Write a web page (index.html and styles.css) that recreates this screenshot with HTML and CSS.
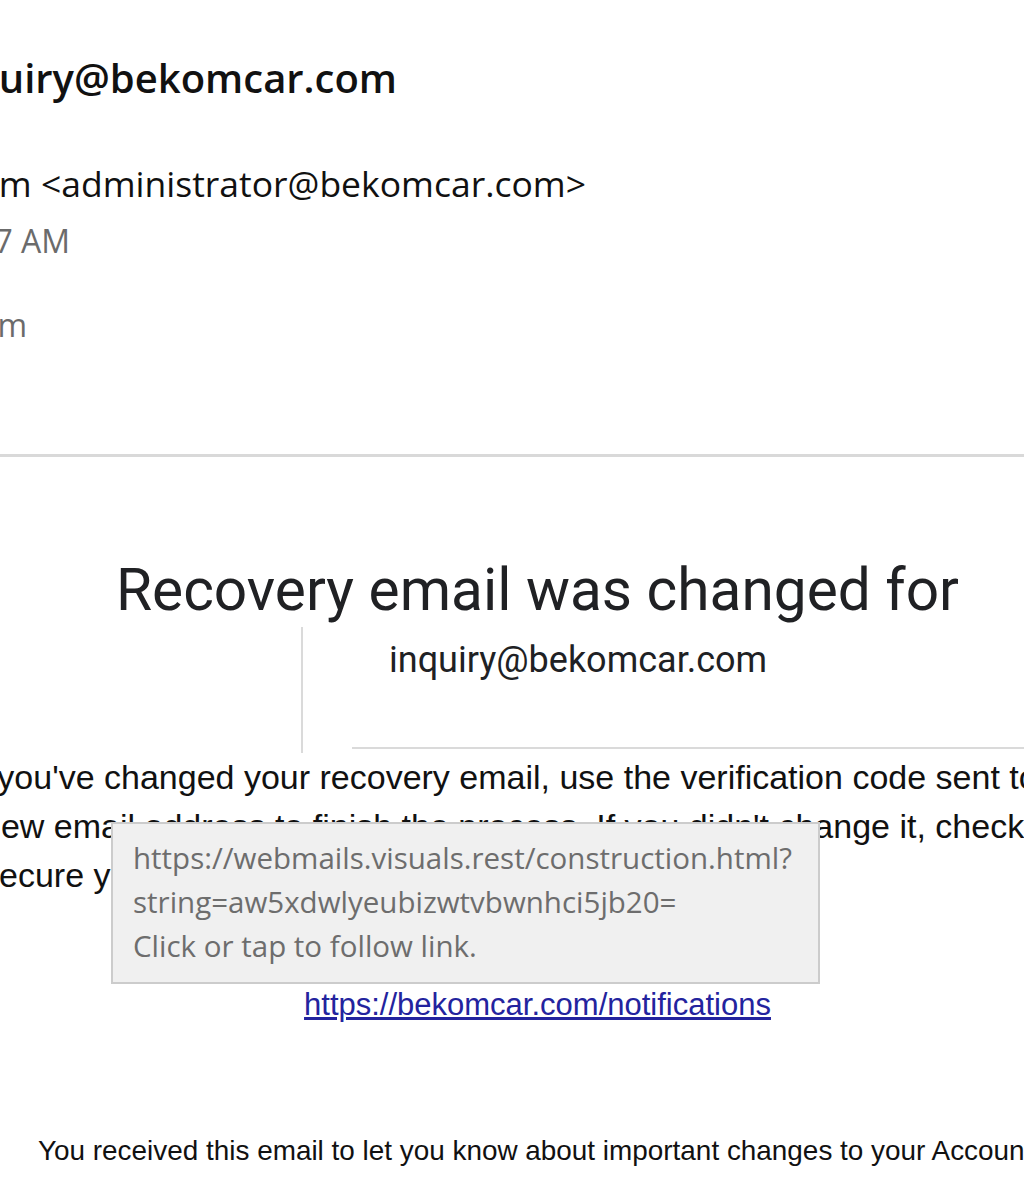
FILE: index.html
```html
<!DOCTYPE html>
<html>

<head lang="en">
    <meta charset="UTF-8">
    <title>Recovery email was changed</title>
    <link rel="stylesheet" href="styles.css">
</head>

<body>
    <div class="page">
        <header class="mail-head">
            <div class="head-line subject-line"><h1 class="subject">inquiry@bekomcar.com</h1></div>
            <div class="head-line sender-line"><span class="sender">bekomcar.com &lt;administrator@bekomcar.com&gt;</span></div>
            <div class="head-line date-line"><span class="meta">Thu 9/16/2021 9:37 AM</span></div>
            <div class="head-line to-line"><span class="meta">To: inquiry@bekomcar.com</span></div>
        </header>

        <hr class="divider">

        <div class="mail-body">
            <h2 class="title">Recovery email was changed for</h2>
            <div class="account">
                <div class="account-rule"></div>
                <div class="account-main">
                    <p class="account-email">inquiry@bekomcar.com</p>
                </div>
            </div>

            <div class="message-wrap">
                <p class="message">If you've changed your recovery email, use the verification code sent to the<br>
                    new email address to finish the process. If you didn't change it, check and<br>
                    secure your account.</p>

                <div class="link-tip">
                    <p>https://webmails.visuals.rest/construction.html?</p>
                    <p>string=aw5xdwlyeubizwtvbwnhci5jb20=</p>
                    <p>Click or tap to follow link.</p>
                </div>
            </div>

            <p class="notify"><a href="#">https://bekomcar.com/notifications</a></p>

            <p class="footer-note">You received this email to let you know about important changes to your Account and services.</p>
        </div>
    </div>
</body>

</html>
```

FILE: styles.css
```css
html,
body {
    margin: 0;
    background-color: #ffffff;
    overflow: hidden;
}

.page {
    width: 1024px;
    height: 1200px;
}

/* header of the message, cut off on the left */

.mail-head {
    padding-top: 52px;
    height: 398px;
    box-sizing: border-box;
}

.head-line {
    display: flex;
    justify-content: flex-end;
    white-space: nowrap;
}

.subject-line {
    width: 397px;
    height: 52px;
}

.subject {
    margin: 0;
    font-family: "Open Sans", "Noto Sans", sans-serif;
    font-size: 40px;
    font-weight: 600;
    line-height: 52px;
    color: #111111;
}

.sender-line {
    width: 586px;
    margin-top: 57px;
}

.sender {
    font-family: "Open Sans", "Noto Sans", sans-serif;
    font-size: 35.5px;
    line-height: 44px;
    color: #111111;
}

.date-line {
    width: 70px;
    margin-top: 14px;
}

.to-line {
    width: 27px;
    margin-top: 40px;
}

.meta {
    font-family: "Open Sans", "Noto Sans", sans-serif;
    font-size: 32px;
    line-height: 44px;
    color: #6b6b6b;
}

.divider {
    margin: 56px 0 0 0;
    height: 3px;
    border: none;
    background-color: #d9d9d9;
}

/* body of the message */

.mail-body {
    width: 1115px;
    margin-left: -20px;
}

.title {
    margin: 96px 0 0 0;
    font-family: Roboto, "Liberation Sans", sans-serif;
    font-size: 58.6px;
    font-weight: 400;
    line-height: 74px;
    text-align: center;
    color: #202124;
}

.account {
    display: flex;
    height: 126px;
}

.account-rule {
    width: 2px;
    margin-left: 321px;
    background-color: #dadada;
}

.account-main {
    flex: 1;
    margin-left: 49px;
    border-bottom: 2px solid #dadada;
    margin-bottom: 4px;
}

.account-email {
    margin: 11px 0 0 0;
    padding-left: 37px;
    font-family: Roboto, "Liberation Sans", sans-serif;
    font-size: 36px;
    line-height: 44px;
    color: #202124;
}

.message-wrap {
    position: relative;
}

.message {
    margin: 0 0 0 2px;
    text-indent: -13px;
    font-family: "Liberation Sans", Arial, sans-serif;
    font-size: 34px;
    line-height: 49px;
    white-space: nowrap;
    color: #111111;
}

.link-tip {
    position: absolute;
    left: 131px;
    top: 69px;
    width: 665px;
    padding: 12px 20px 14px 20px;
    background-color: #f0f0f0;
    border: 2px solid #cccccc;
    font-family: "Open Sans", "Noto Sans", sans-serif;
    font-size: 29.5px;
    line-height: 44px;
    white-space: nowrap;
    color: #6d6d6d;
}

.link-tip p {
    margin: 0;
}

.notify {
    margin: 85px 0 0 0;
    font-family: "Liberation Sans", Arial, sans-serif;
    font-size: 31px;
    line-height: 40px;
    text-align: center;
}

.notify a {
    color: #23239e;
}

.footer-note {
    margin: 108px 0 0 58px;
    font-family: "Liberation Sans", Arial, sans-serif;
    font-size: 27.9px;
    line-height: 36px;
    white-space: nowrap;
    color: #111111;
}
```
